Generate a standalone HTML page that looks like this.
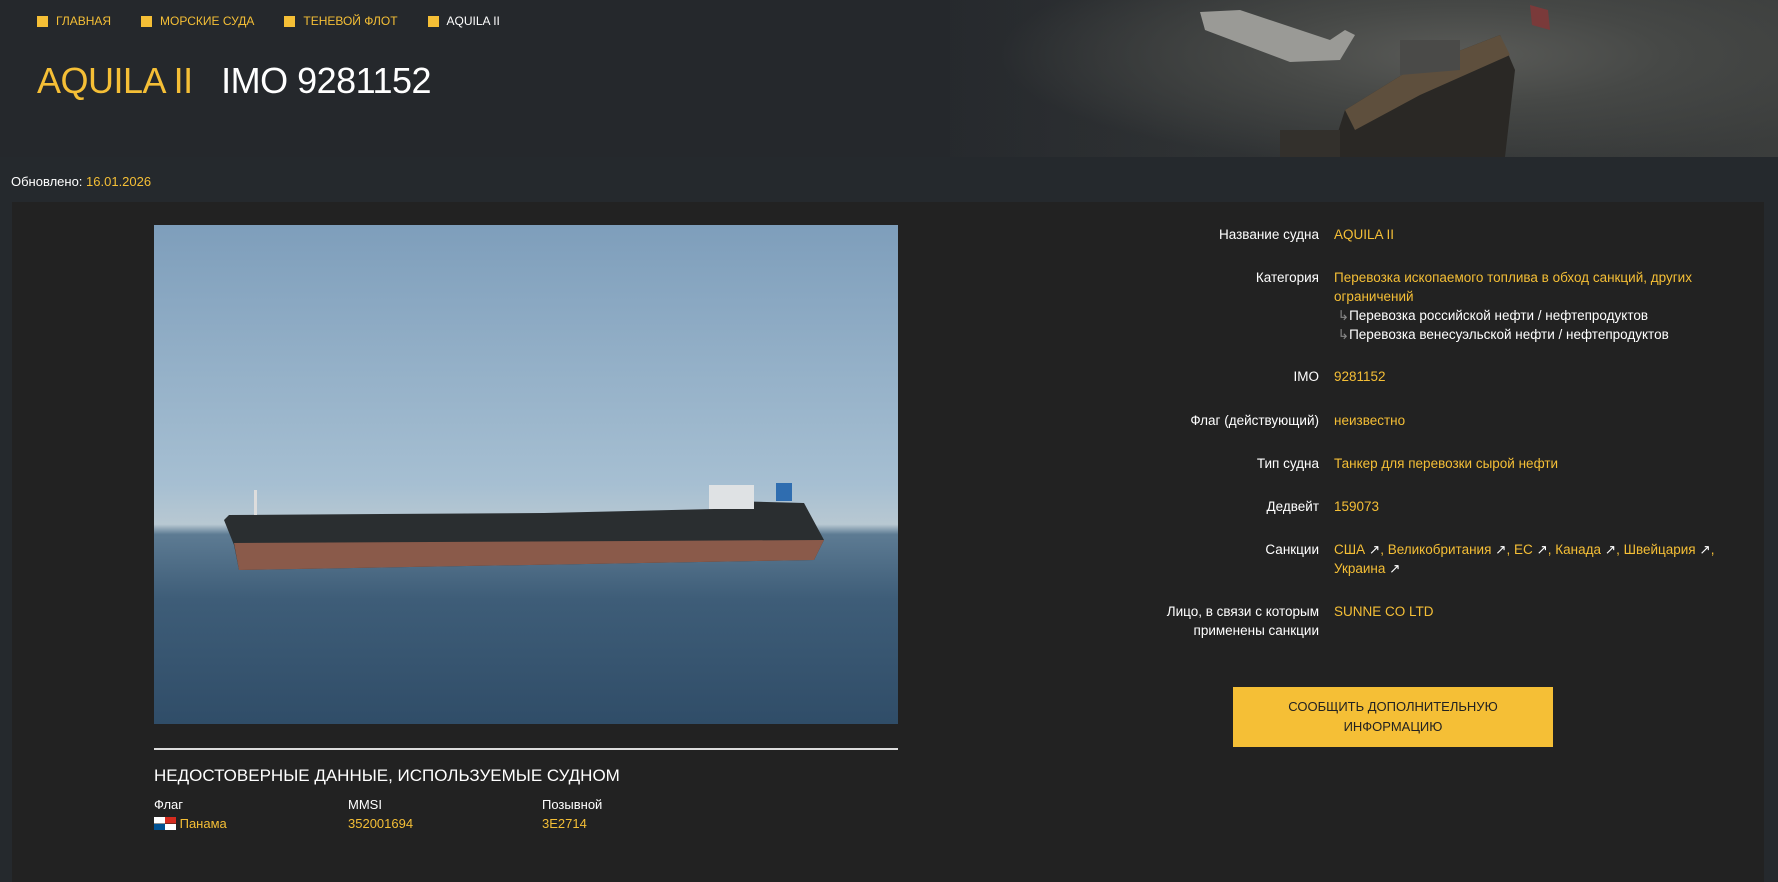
<!DOCTYPE html>
<html><head><meta charset="utf-8"><style>
*{margin:0;padding:0;box-sizing:border-box}
body{width:1778px;height:870px;overflow:hidden;background:#25292d;font-family:"Liberation Sans",sans-serif;color:#fff;position:relative;font-size:14px}
.hdr{position:absolute;left:0;top:0;width:1778px;height:157px;background:#25282c;overflow:hidden}
.hdr .bg{position:absolute;left:950px;top:0;width:828px;height:157px;background:radial-gradient(ellipse 70% 90% at 62% 35%,#5a5b58 0%,#464846 35%,#33363718 80%),linear-gradient(90deg,#25282c 0%,#2e3133 30%,#3c3e3d 100%)}
.y{color:#f5bf36}
.nav{position:absolute;top:14px;left:37px;font-size:12px;display:flex;gap:30px}
.nav span{display:flex;align-items:center;gap:8px}
.nav i{display:inline-block;width:11px;height:11px;background:#f5bf36}
.title{position:absolute;left:37px;top:60px;font-size:36px;letter-spacing:-0.5px}
.upd{position:absolute;left:11px;top:174px;font-size:13px}
.panel{position:absolute;left:12px;top:202px;width:1752px;height:680px;background:#222222}
.photo{position:absolute;left:154px;top:225px;width:744px;height:499px;background:linear-gradient(#7e9ebb 0%,#a6bfd2 52%,#b8c8d2 60%,#5d7b93 62%,#3e5d78 75%,#304d68 100%)}
.lbl{position:absolute;right:459px;text-align:right;font-size:13.5px;line-height:19px}
.val{position:absolute;left:1334px;font-size:13.5px;line-height:19px;color:#f5bf36}
.btn{position:absolute;left:1233px;top:687px;width:320px;height:60px;background:#f5bf36;color:#222;font-size:13px;text-align:center;line-height:20px;padding-top:10px}
.line{position:absolute;left:154px;top:748px;width:744px;height:2px;background:#ddd}
.h2{position:absolute;left:154px;top:766px;font-size:17px}
.sm{position:absolute;font-size:13px}
</style></head><body>
<div class="hdr"><div class="bg"></div>
<svg style="position:absolute;left:1180px;top:0" width="598" height="157">
<path d="M20 12 L60 10 L150 40 L165 30 L175 35 L160 60 L110 62 L25 30Z" fill="#9a9a96"/>
<path d="M150 157 L165 110 L230 70 L320 35 L335 70 L325 157Z" fill="#2a2825"/>
<path d="M165 110 L230 70 L320 35 L330 55 L240 95 L175 130Z" fill="#5e4f3d"/>
<path d="M220 40 L280 40 L280 70 L220 75Z" fill="#4a4a48"/>
<path d="M100 130 L160 130 L160 157 L100 157Z" fill="#33302c"/>
<path d="M350 5 L368 10 L370 30 L352 25Z" fill="#7a3a3a"/>
</svg>
<div class="nav"><span class="y"><i></i>ГЛАВНАЯ</span><span class="y"><i></i>МОРСКИЕ СУДА</span><span class="y"><i></i>ТЕНЕВОЙ ФЛОТ</span><span><i></i>AQUILA II</span></div>
<div class="title"><span class="y">AQUILA II</span>&nbsp;&nbsp;&nbsp;IMO 9281152</div>
</div>
<div class="upd">Обновлено: <span class="y">16.01.2026</span></div>
<div class="panel"></div>
<div class="photo">
<svg width="744" height="499" style="position:absolute;left:0;top:0">
<path d="M70 295 L75 290 L390 288 L560 284 L575 276 L650 278 L670 315 L660 335 L85 345 L80 320Z" fill="#2a2e30"/>
<path d="M80 318 L670 315 L660 335 L85 345Z" fill="#8a5a4a"/>
<rect x="555" y="260" width="45" height="24" fill="#dfe2e4"/>
<rect x="622" y="258" width="16" height="18" fill="#2f6db0"/>
<rect x="100" y="265" width="3" height="25" fill="#ddd"/>
</svg></div>
<div class="lbl" style="top:225px">Название судна</div><div class="val" style="top:225px">AQUILA II</div>
<div class="lbl" style="top:268px">Категория</div><div class="val" style="top:268px">Перевозка ископаемого топлива в обход санкций, других<br>ограничений<br><span style="color:#fff">&nbsp;<span style="color:#888">↳</span>Перевозка российской нефти / нефтепродуктов<br>&nbsp;<span style="color:#888">↳</span>Перевозка венесуэльской нефти / нефтепродуктов</span></div>
<div class="lbl" style="top:367px">IMO</div><div class="val" style="top:367px">9281152</div>
<div class="lbl" style="top:411px">Флаг (действующий)</div><div class="val" style="top:411px">неизвестно</div>
<div class="lbl" style="top:454px">Тип судна</div><div class="val" style="top:454px">Танкер для перевозки сырой нефти</div>
<div class="lbl" style="top:497px">Дедвейт</div><div class="val" style="top:497px">159073</div>
<div class="lbl" style="top:540px">Санкции</div><div class="val" style="top:540px">США <span style="color:#fff">↗</span>, Великобритания <span style="color:#fff">↗</span>, ЕС <span style="color:#fff">↗</span>, Канада <span style="color:#fff">↗</span>, Швейцария <span style="color:#fff">↗</span>,<br>Украина <span style="color:#fff">↗</span></div>
<div class="lbl" style="top:602px">Лицо, в связи с которым<br>применены санкции</div><div class="val" style="top:602px">SUNNE CO LTD</div>
<div class="btn">СООБЩИТЬ ДОПОЛНИТЕЛЬНУЮ<br>ИНФОРМАЦИЮ</div>
<div class="line"></div>
<div class="h2">НЕДОСТОВЕРНЫЕ ДАННЫЕ, ИСПОЛЬЗУЕМЫЕ СУДНОМ</div>
<div class="sm" style="left:154px;top:797px">Флаг</div>
<div class="sm" style="left:348px;top:797px">MMSI</div>
<div class="sm" style="left:542px;top:797px">Позывной</div>
<div class="sm y" style="left:154px;top:816px"><span style="display:inline-block;width:22px;height:13px;vertical-align:-2px;background:linear-gradient(90deg,#fff 50%,#d52b1e 50%) top/100% 50% no-repeat,linear-gradient(90deg,#005293 50%,#fff 50%) bottom/100% 50% no-repeat"></span> Панама</div>
<div class="sm y" style="left:348px;top:816px">352001694</div>
<div class="sm y" style="left:542px;top:816px">3E2714</div>
</body></html>
